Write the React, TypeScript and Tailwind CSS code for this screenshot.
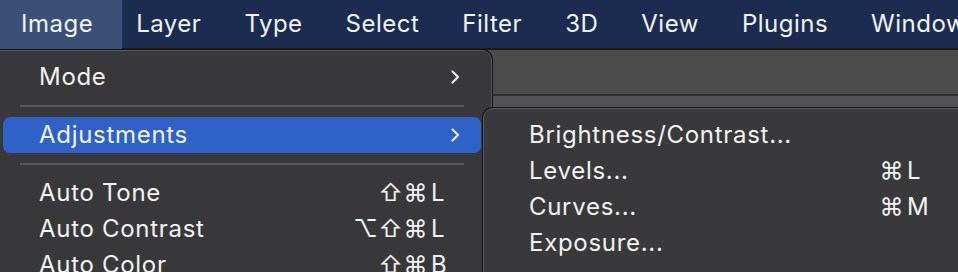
const topMenus = ['Image', 'Layer', 'Type', 'Select', 'Filter', '3D', 'View', 'Plugins', 'Window'];

type Item =
  | { kind: 'sep' }
  | { kind: 'item'; label: string; mods?: string[]; keyChar?: string; sub?: boolean; active?: boolean };

const imageMenu: Item[] = [
  { kind: 'item', label: 'Mode', sub: true },
  { kind: 'sep' },
  { kind: 'item', label: 'Adjustments', sub: true, active: true },
  { kind: 'sep' },
  { kind: 'item', label: 'Auto Tone', mods: ['⇧', '⌘'], keyChar: 'L' },
  { kind: 'item', label: 'Auto Contrast', mods: ['⌥', '⇧', '⌘'], keyChar: 'L' },
  { kind: 'item', label: 'Auto Color', mods: ['⇧', '⌘'], keyChar: 'B' },
];

const adjustments: Item[] = [
  { kind: 'item', label: 'Brightness/Contrast...' },
  { kind: 'item', label: 'Levels...', mods: ['⌘'], keyChar: 'L' },
  { kind: 'item', label: 'Curves...', mods: ['⌘'], keyChar: 'M' },
  { kind: 'item', label: 'Exposure...' },
];

function Chevron() {
  return (
    <svg width="10" height="14" viewBox="0 0 10 14" fill="none" stroke="currentColor" strokeWidth="2.2" strokeLinecap="round" strokeLinejoin="round">
      <path d="M2.5 1.5 8 7l-5.5 5.5" />
    </svg>
  );
}

function MenuRows({ items, textPad, rightPad }: { items: Item[]; textPad: string; rightPad: string }) {
  return (
    <div className="flex flex-col">
      {items.map((it, i) =>
        it.kind === 'sep' ? (
          <div key={i} className="h-[22px] flex items-center px-[17px]">
            <div className="h-[2px] w-full bg-[#58585a]" />
          </div>
        ) : (
          <div
            key={i}
            className={`h-[36px] flex items-center justify-between rounded-[7px] ${textPad} ${rightPad} ${
              it.active ? 'bg-[#2f62c9]' : ''
            }`}
          >
            <span>{it.label}</span>
            <span className="flex items-center">
              {it.mods?.map((m, j) => (
                <span key={j} className="w-[25px] text-center font-['Inter','DejaVu_Sans',sans-serif] text-[24px] tracking-normal">
                  {m}
                </span>
              ))}
              <span className="w-[32px] pl-[3px] flex justify-start items-center">
                {it.keyChar}
                {it.sub && (
                  <span className="ml-auto text-[#e8e8e8]">
                    <Chevron />
                  </span>
                )}
              </span>
            </span>
          </div>
        )
      )}
    </div>
  );
}

export default function App() {
  return (
    <div className="relative w-[958px] h-[272px] overflow-hidden bg-[#3c3c3e] font-['Inter','DejaVu_Sans',sans-serif] text-[#f2f2f2]">
      {/* menu bar */}
      <div className="h-[48px] bg-[#1b2c50] flex items-center pl-[21px] gap-[43px] text-[24px] tracking-[0.5px] whitespace-nowrap">
        {topMenus.map((m, i) => (
          <span key={m} className="relative">
            {i === 0 && (
              <span className="absolute left-[-29px] right-[-29px] top-[-12px] bottom-[-13px] rounded-[6px] bg-[#3a5076]" />
            )}
            <span className="relative">{m}</span>
          </span>
        ))}
      </div>

      {/* app chrome behind menus */}
      <div className="h-[2px] bg-[#1a1a1a]" />
      <div className="h-[44px] bg-[#4b4b4b]" />
      <div className="h-[2px] bg-[#2f2f2f]" />
      <div className="h-[11px] bg-[#525252]" />
      <div className="h-[2px] bg-[#161616]" />

      {/* Image menu */}
      <div className="absolute left-[-6px] top-[50px] w-[498px] h-[260px] rounded-tr-[10px] bg-[#38383a] border border-[#5b5b5d] shadow-[0_0_0_1px_#111] pt-[8px] pl-[8px] pr-[10px] text-[24px] tracking-[0.7px]">
        <MenuRows items={imageMenu} textPad="pl-[36px]" rightPad="pr-[21px]" />
      </div>

      {/* Adjustments submenu */}
      <div className="absolute left-[483px] top-[108px] w-[500px] h-[200px] rounded-tl-[10px] bg-[#39393b] border border-[#5b5b5d] shadow-[0_0_0_1px_#111] pt-[8px] px-[8px] text-[24px] tracking-[0.7px]">
        <MenuRows items={adjustments} textPad="pl-[37px]" rightPad="pr-[38px]" />
      </div>
    </div>
  );
}
